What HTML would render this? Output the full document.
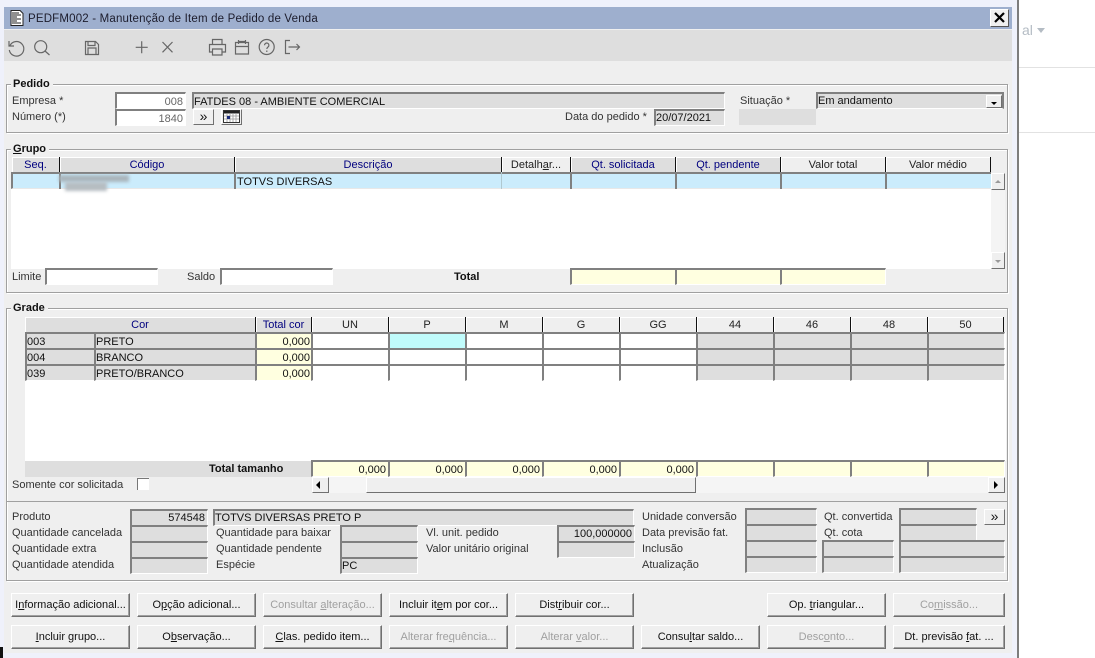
<!DOCTYPE html>
<html><head><meta charset="utf-8"><style>
html,body{margin:0;padding:0;width:1095px;height:658px;overflow:hidden;background:#fff}
body{position:relative;font:11px/16px "Liberation Sans",Arial,sans-serif;color:#222}
div,span.a{position:absolute;box-sizing:border-box;white-space:nowrap}
.f{border-top:2px solid #808080;border-left:2px solid #808080;border-right:1px solid #fff;border-bottom:1px solid #fff;height:17px;padding:0 2px 0 0;line-height:16px;color:#111}
.d{line-height:14px}
.g{background:#dedede}.w{background:#fff}.y{background:#ffffe0}.r{text-align:right}
.ro{color:#666}
.lg{color:#808080}
.l{color:#333;height:16px;transform:translateY(1px)}
.b{font-weight:bold;color:#111}
.box{border:1px solid #a0a0a0;box-shadow:inset 1px 1px 0 #fff,1px 1px 0 #fff}
.leg{background:#efefef;padding:0 3px 0 2px;font-weight:bold;color:#111;height:14px;line-height:15px}
.h{height:15px;top:157px;background:#efefef;border-right:1px solid #111;box-shadow:inset 1px 1px 0 #fff;text-align:center;line-height:17px;color:#222}
.h2{top:317px}
.n{color:#00007f}.hg{background:#dedede}
.btn{height:24px;background:#efefef;border:1px solid;border-color:#fff #707070 #707070 #fff;box-shadow:inset -1px -1px 0 #a0a0a0;text-align:center;line-height:22px;color:#111}
.dis{color:#a0a0a0}
.t1{top:593px}.t2{top:625px}
.sb{background:#efefef;border:1px solid;border-color:#fff #707070 #707070 #fff;text-align:center}
</style></head><body>
<div style="left:0;top:0;width:1017px;height:658px;background:#eff1fb"></div>
<div style="left:1017px;top:0;width:2px;height:658px;background:#7d7d7d"></div>
<div style="left:0;top:647px;width:3px;height:11px;background:#111"></div>
<div style="left:1019px;top:67px;width:76px;height:1px;background:#e2e2e2"></div>
<div style="left:1019px;top:132px;width:76px;height:1px;background:#e2e2e2"></div>
<div style="left:1022px;top:22px;font-size:14px;color:#b4bcc4">al</div>
<div style="left:1037px;top:28px;width:0;height:0;border:4px solid transparent;border-top:5px solid #b4bcc4;border-bottom:0"></div>

<div style="left:4px;top:7px;width:1008px;height:646px;background:#efefef"></div>
<div style="left:4px;top:7px;width:1008px;height:22px;background:#9eafce"></div>
<svg style="position:absolute;left:10px;top:10px" width="14" height="16" viewBox="0 0 14 16"><path d="M1 .5h9l3 3v12H1z" fill="#fff" stroke="#222"/><path d="M2 3h7M2 5h9M2 7h5M2 9h9M2 11h5M2 13h9" stroke="#222" stroke-width="1.1"/></svg>
<div style="left:28px;top:11px;color:#1c1c2c;font-size:11.5px;letter-spacing:.18px">PEDFM002 - Manutenção de Item de Pedido de Venda</div>
<div style="left:990px;top:9px;width:19px;height:18px;background:#efefef;border:1px solid;border-color:#fff #555 #555 #fff"></div>
<svg style="position:absolute;left:994px;top:12px" width="11" height="11" viewBox="0 0 11 11"><path d="M1 1l9 9M10 1l-9 9" stroke="#000" stroke-width="2.2"/></svg>
<div style="left:4px;top:30px;width:1008px;height:31px;background:#dedede"></div>
<svg style="position:absolute;left:0;top:32px" width="310" height="28" viewBox="0 0 310 28" fill="none" stroke="#666" stroke-width="1.2">
<path d="M10 13.500A7.300 7.300 0 1 1 9.300 18M9 9v5h5"/>
<circle cx="40.700" cy="14.700" r="6"/><path d="M45 19l4.500 4"/>
<path d="M85.500 9.500h10l3 3v10h-13zM88 9.500v4h7v-4M88 22.500v-6.500h8v6.500"/>
<path d="M141.700 9.300v12M135.700 15.300h12"/>
<path d="M162.500 10l10 10.300M172.500 10l-10 10.300"/>
<path d="M212.500 12.500V7.500h9.500v5M212.500 20h-3v-7.500h16v7.500h-3M212.500 17h9.500v6h-9.500z"/>
<path d="M235.500 10.500h13v11.500h-13zM235.500 14.500h13M238.500 8v4M245.500 8v4M239 9.500h6"/>
<circle cx="266.700" cy="15" r="7.500"/><path d="M264.500 13.200a2.200 2.200 0 1 1 3.500 1.800c-.8.6-1.200 1-1.200 2M266.800 18.500v1.500"/>
<path d="M290 8.500h-4.500v13h4.500M288.500 15h11M296.500 12l3 3-3 3"/>
</svg>

<!-- Pedido -->
<div class="box" style="left:6px;top:84px;width:1002px;height:49px"></div>
<div class="leg" style="left:11px;top:77px">Pedido</div>
<div class="l lg" style="left:12px;top:92px">Empresa *</div>
<div class="l lg" style="left:12px;top:108px">Número (*)</div>
<div class="f w r ro" style="left:115px;top:92px;width:71px">008</div>
<div class="f w r ro" style="left:115px;top:109px;width:71px">1840</div>
<div class="f g" style="left:192px;top:92px;width:533px">FATDES 08 - AMBIENTE COMERCIAL</div>
<div class="sb" style="left:193px;top:109px;width:21px;height:16px;line-height:12px;color:#111;font-size:14px">»</div>
<div class="sb" style="left:221px;top:109px;width:21px;height:16px"></div>
<svg style="position:absolute;left:223px;top:110px" width="17" height="13" viewBox="0 0 17 13"><rect x=".5" y=".5" width="16" height="12" fill="#fff" stroke="#333"/><rect x="1" y="1" width="15" height="2.500" fill="#222"/><path d="M1 6h15M1 9h15M4 3v9M7 3v9M10 3v9M13 3v9" stroke="#999" stroke-width=".8"/><rect x="4" y="6" width="3" height="3" fill="#1a2a7a"/></svg>
<div class="l" style="left:565px;top:108px">Data do pedido *</div>
<div class="f g d" style="left:654px;top:109px;width:71px">20/07/2021</div>
<div class="l" style="left:740px;top:92px">Situação *</div>
<div class="f g" style="left:816px;top:92px;width:188px;line-height:14px;border-right:2px solid #808080">Em andamento</div>
<div class="sb" style="left:986px;top:95px;width:16px;height:13px"></div>
<div style="left:991px;top:102px;width:0;height:0;border:3px solid transparent;border-top:3px solid #000;border-bottom:0"></div>
<div class="g" style="left:739px;top:109px;width:77px;height:16px"></div>

<!-- Grupo -->
<div class="box" style="left:6px;top:149px;width:1002px;height:144px"></div>
<div class="leg" style="left:11px;top:142px"><u>G</u>rupo</div>
<div class="h hg n" style="left:12px;width:48px">Seq.</div>
<div class="h hg n" style="left:60px;width:175px">Código</div>
<div class="h hg n" style="left:235px;width:267px">Descrição</div>
<div class="h" style="left:502px;width:69px">Detalh<u>a</u>r...</div>
<div class="h hg n" style="left:571px;width:105px">Qt. solicitada</div>
<div class="h hg n" style="left:676px;width:105px">Qt. pendente</div>
<div class="h" style="left:781px;width:105px">Valor total</div>
<div class="h" style="left:886px;width:105px">Valor médio</div>
<div class="w" style="left:11px;top:172px;width:980px;height:97px"></div>
<div style="left:11px;top:172px;width:980px;height:17px;background:#cbecfc;border-top:2px solid #808080;border-left:2px solid #808080;border-bottom:1px solid #e8e8e8"></div>
<div style="left:59px;top:172px;width:2px;height:17px;background:#808080"></div>
<div style="left:234px;top:172px;width:2px;height:17px;background:#808080"></div>
<div style="left:501px;top:172px;width:1px;height:17px;background:#b0c8d0"></div>
<div style="left:570px;top:172px;width:2px;height:17px;background:#808080"></div>
<div style="left:675px;top:172px;width:2px;height:17px;background:#808080"></div>
<div style="left:780px;top:172px;width:2px;height:17px;background:#808080"></div>
<div style="left:885px;top:172px;width:2px;height:17px;background:#808080"></div>
<div style="left:237px;top:174px;color:#111">TOTVS DIVERSAS</div>
<div style="left:59px;top:175px;width:70px;height:7px;background:#aab5bc;filter:blur(1.5px)"></div>
<div style="left:65px;top:182px;width:42px;height:9px;background:#b6bdc2;filter:blur(1.5px)"></div>
<div style="left:991px;top:173px;width:14px;height:96px;background:#f4f4f4"></div>
<div class="sb" style="left:991px;top:173px;width:14px;height:17px"></div>
<div style="left:995px;top:180px;width:0;height:0;border:3px solid transparent;border-bottom:3px solid #999;border-top:0"></div>
<div class="sb" style="left:991px;top:252px;width:14px;height:17px"></div>
<div style="left:995px;top:260px;width:0;height:0;border:3px solid transparent;border-top:3px solid #999;border-bottom:0"></div>
<div class="l" style="left:12px;top:268px">Limite</div>
<div class="f w" style="left:45px;top:268px;width:113px"></div>
<div class="l" style="left:187px;top:268px">Saldo</div>
<div class="f w" style="left:220px;top:268px;width:113px"></div>
<div class="l b" style="left:454px;top:268px">Total</div>
<div class="f y" style="left:570px;top:268px;width:106px"></div>
<div class="f y" style="left:675px;top:268px;width:106px"></div>
<div class="f y" style="left:780px;top:268px;width:106px"></div>

<!-- Grade -->
<div class="box" style="left:6px;top:308px;width:1002px;height:273px"></div>
<div class="leg" style="left:11px;top:301px">Grade</div>
<div class="w" style="left:25px;top:332px;width:981px;height:129px"></div>
<div class="h h2 hg n" style="left:25px;width:231px">Cor</div>
<div class="h h2 hg n" style="left:256px;width:56px">Total cor</div>
<div class="h h2" style="left:312px;width:77px">UN</div>
<div class="h h2" style="left:389px;width:77px">P</div>
<div class="h h2" style="left:466px;width:77px">M</div>
<div class="h h2" style="left:543px;width:77px">G</div>
<div class="h h2" style="left:620px;width:77px">GG</div>
<div class="h h2" style="left:697px;width:77px">44</div>
<div class="h h2" style="left:774px;width:77px">46</div>
<div class="h h2" style="left:851px;width:77px">48</div>
<div class="h h2" style="left:928px;width:76px">50</div>

<div class="f g" style="left:25px;top:332px;width:70px">003</div><div class="f g" style="left:94px;top:332px;width:163px">PRETO</div><div class="f y r" style="left:255px;top:332px;width:58px">0,000</div>
<div class="f g" style="left:25px;top:348px;width:70px">004</div><div class="f g" style="left:94px;top:348px;width:163px">BRANCO</div><div class="f y r" style="left:255px;top:348px;width:58px">0,000</div>
<div class="f g" style="left:25px;top:364px;width:70px">039</div><div class="f g" style="left:94px;top:364px;width:163px">PRETO/BRANCO</div><div class="f y r" style="left:255px;top:364px;width:58px">0,000</div>

<div class="f w" style="left:311px;top:332px;width:78px"></div><div class="f" style="left:388px;top:332px;width:78px;background:#c0fbfb;border-right:1px solid #111"></div><div class="f w" style="left:465px;top:332px;width:78px"></div><div class="f w" style="left:542px;top:332px;width:78px"></div><div class="f w" style="left:619px;top:332px;width:78px"></div>
<div class="f w" style="left:311px;top:348px;width:78px"></div><div class="f w" style="left:388px;top:348px;width:78px"></div><div class="f w" style="left:465px;top:348px;width:78px"></div><div class="f w" style="left:542px;top:348px;width:78px"></div><div class="f w" style="left:619px;top:348px;width:78px"></div>
<div class="f w" style="left:311px;top:364px;width:78px"></div><div class="f w" style="left:388px;top:364px;width:78px"></div><div class="f w" style="left:465px;top:364px;width:78px"></div><div class="f w" style="left:542px;top:364px;width:78px"></div><div class="f w" style="left:619px;top:364px;width:78px"></div>

<div class="f g" style="left:696px;top:332px;width:78px"></div><div class="f g" style="left:773px;top:332px;width:78px"></div><div class="f g" style="left:850px;top:332px;width:78px"></div><div class="f g" style="left:927px;top:332px;width:78px"></div>
<div class="f g" style="left:696px;top:348px;width:78px"></div><div class="f g" style="left:773px;top:348px;width:78px"></div><div class="f g" style="left:850px;top:348px;width:78px"></div><div class="f g" style="left:927px;top:348px;width:78px"></div>
<div class="f g" style="left:696px;top:364px;width:78px"></div><div class="f g" style="left:773px;top:364px;width:78px"></div><div class="f g" style="left:850px;top:364px;width:78px"></div><div class="f g" style="left:927px;top:364px;width:78px"></div>

<div class="g" style="left:25px;top:461px;width:287px;height:16px"></div>
<div class="b" style="left:209px;top:461px">Total tamanho</div>
<div class="f y r" style="left:311px;top:460px;width:78px">0,000</div><div class="f y r" style="left:388px;top:460px;width:78px">0,000</div><div class="f y r" style="left:465px;top:460px;width:78px">0,000</div><div class="f y r" style="left:542px;top:460px;width:78px">0,000</div><div class="f y r" style="left:619px;top:460px;width:78px">0,000</div><div class="f y" style="left:696px;top:460px;width:78px"></div><div class="f y" style="left:773px;top:460px;width:78px"></div><div class="f y" style="left:850px;top:460px;width:78px"></div><div class="f y" style="left:927px;top:460px;width:78px"></div>

<div class="l" style="left:12px;top:476px">Somente cor solicitada</div>
<div class="w" style="left:137px;top:478px;width:12px;height:12px;border-top:1px solid #777;border-left:1px solid #777"></div>
<div style="left:312px;top:477px;width:693px;height:16px;background:#f5f5f5"></div>
<div class="sb" style="left:312px;top:477px;width:17px;height:16px"></div>
<div style="left:316px;top:481px;width:0;height:0;border:4px solid transparent;border-right:4px solid #000;border-left:0"></div>
<div class="sb" style="left:366px;top:477px;width:330px;height:16px"></div>
<div class="sb" style="left:988px;top:477px;width:17px;height:16px"></div>
<div style="left:994px;top:481px;width:0;height:0;border:4px solid transparent;border-left:4px solid #000;border-right:0"></div>
<div style="left:7px;top:501px;width:1000px;height:1px;background:#a0a0a0"></div>

<!-- details -->
<div class="l" style="left:12px;top:508px">Produto</div>
<div class="l" style="left:12px;top:524px">Quantidade cancelada</div>
<div class="l" style="left:12px;top:540px">Quantidade extra</div>
<div class="l" style="left:12px;top:556px">Quantidade atendida</div>
<div class="f g r d" style="left:130px;top:509px;width:78px">574548</div>
<div class="f g" style="left:130px;top:525px;width:78px"></div>
<div class="f g" style="left:130px;top:541px;width:78px"></div>
<div class="f g" style="left:130px;top:557px;width:78px"></div>
<div class="f g d" style="left:213px;top:509px;width:421px">TOTVS DIVERSAS PRETO P</div>
<div class="l" style="left:216px;top:524px">Quantidade para baixar</div>
<div class="l" style="left:216px;top:540px">Quantidade pendente</div>
<div class="l" style="left:216px;top:556px">Espécie</div>
<div class="f g" style="left:340px;top:525px;width:78px"></div>
<div class="f g" style="left:340px;top:541px;width:78px"></div>
<div class="f g d" style="left:340px;top:557px;width:78px">PC</div>
<div class="l" style="left:426px;top:524px">Vl. unit. pedido</div>
<div class="l" style="left:426px;top:540px">Valor unitário original</div>
<div class="f g r d" style="left:557px;top:525px;width:78px">100,000000</div>
<div class="f g" style="left:557px;top:541px;width:78px"></div>
<div class="l" style="left:642px;top:508px">Unidade conversão</div>
<div class="l" style="left:642px;top:524px">Data previsão fat.</div>
<div class="l" style="left:642px;top:540px">Inclusão</div>
<div class="l" style="left:642px;top:556px">Atualização</div>
<div class="f g" style="left:745px;top:508px;width:72px"></div>
<div class="f g" style="left:745px;top:524px;width:72px"></div>
<div class="f g" style="left:745px;top:540px;width:72px"></div>
<div class="f g" style="left:745px;top:556px;width:72px"></div>
<div class="l" style="left:824px;top:508px">Qt. convertida</div>
<div class="l" style="left:824px;top:524px">Qt. cota</div>
<div class="f g" style="left:822px;top:540px;width:72px"></div>
<div class="f g" style="left:822px;top:556px;width:72px"></div>
<div class="f g" style="left:899px;top:508px;width:78px"></div>
<div class="f g" style="left:899px;top:524px;width:78px"></div>
<div class="f g" style="left:899px;top:540px;width:106px"></div>
<div class="f g" style="left:899px;top:556px;width:106px"></div>
<div class="sb" style="left:984px;top:509px;width:21px;height:16px;line-height:12px;color:#111;font-size:14px">»</div>

<!-- buttons -->
<div class="btn t1" style="left:11px;width:119px">I<u>n</u>formação adicional...</div>
<div class="btn t1" style="left:137px;width:119px">O<u>p</u>ção adicional...</div>
<div class="btn t1 dis" style="left:263px;width:119px">Consultar <u>a</u>lteração...</div>
<div class="btn t1" style="left:389px;width:119px">Incluir it<u>e</u>m por cor...</div>
<div class="btn t1" style="left:515px;width:119px">Dist<u>r</u>ibuir cor...</div>
<div class="btn t1" style="left:767px;width:119px">Op. <u>t</u>riangular...</div>
<div class="btn t1 dis" style="left:893px;width:112px">Co<u>m</u>issão...</div>
<div class="btn t2" style="left:11px;width:119px"><u>I</u>ncluir grupo...</div>
<div class="btn t2" style="left:137px;width:119px">O<u>b</u>servação...</div>
<div class="btn t2" style="left:263px;width:119px"><u>C</u>las. pedido item...</div>
<div class="btn t2 dis" style="left:389px;width:119px">Alterar fre<u>q</u>uência...</div>
<div class="btn t2 dis" style="left:515px;width:119px">Alterar <u>v</u>alor...</div>
<div class="btn t2" style="left:641px;width:119px">Consu<u>l</u>tar saldo...</div>
<div class="btn t2 dis" style="left:767px;width:119px">Desc<u>o</u>nto...</div>
<div class="btn t2" style="left:893px;width:112px">Dt. previsão <u>f</u>at. ...</div>
</body></html>
